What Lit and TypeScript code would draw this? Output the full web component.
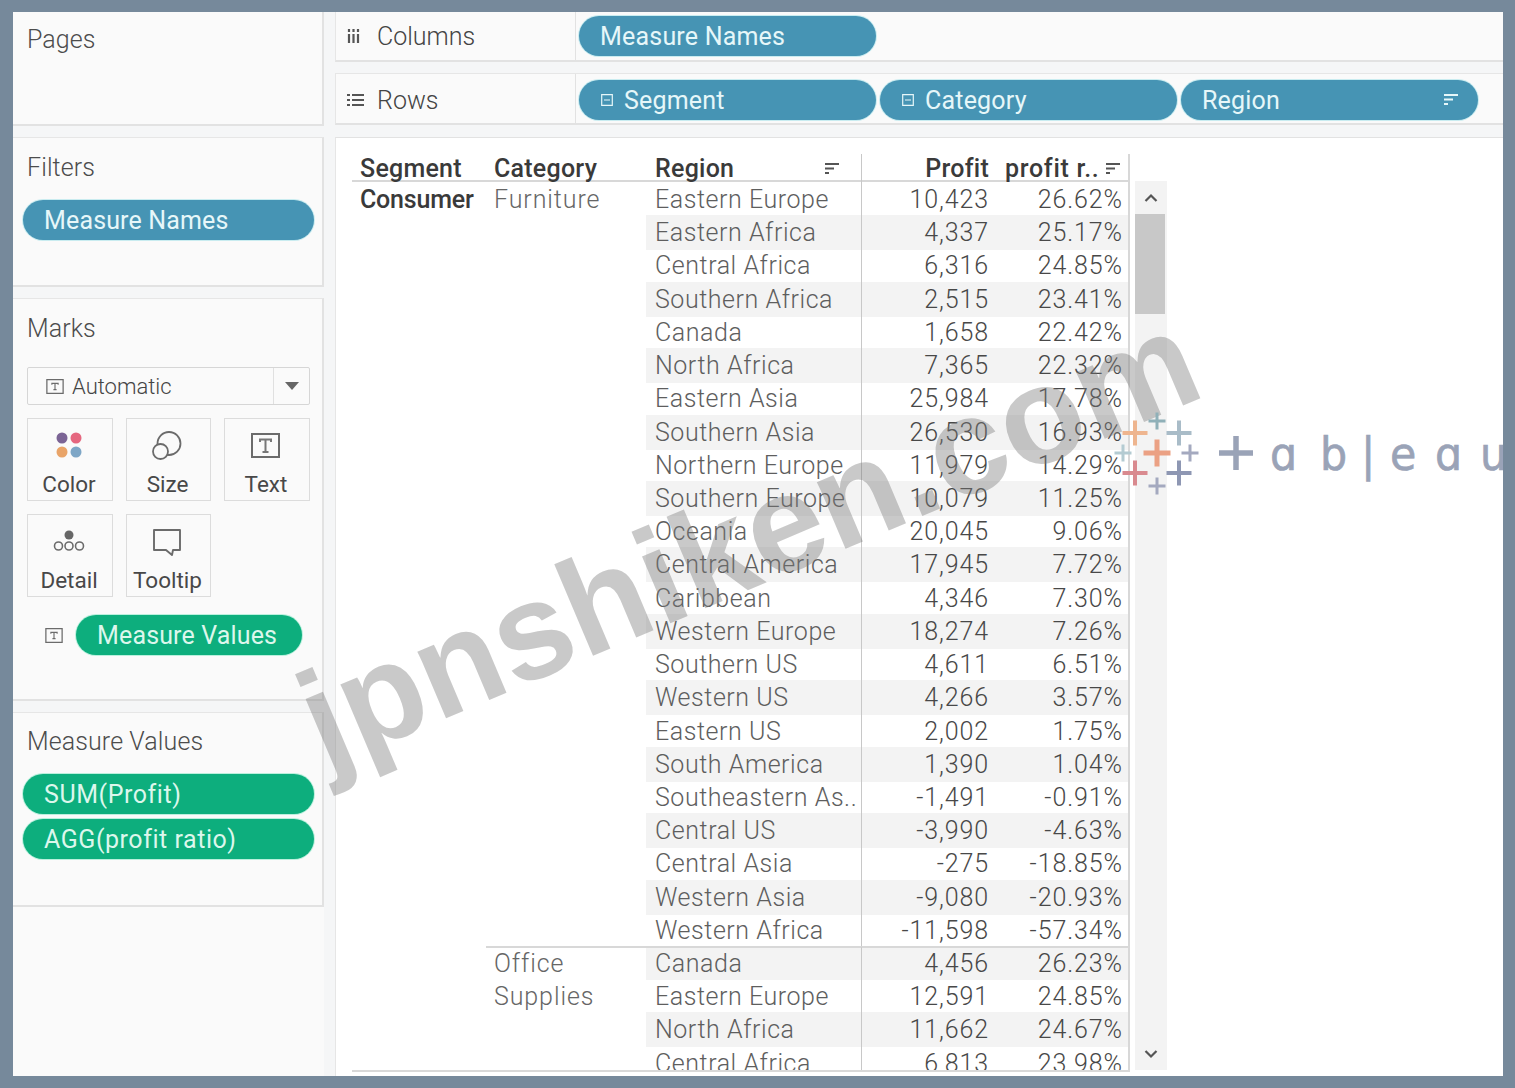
import { LitElement, html, css, svg } from "lit";
import { customElement } from "lit/decorators.js";

const rows: [string, string, string, string?, string?][] = [
  ["Eastern Europe","10,423","26.62%","Consumer","Furniture"],
  ["Eastern Africa","4,337","25.17%"],["Central Africa","6,316","24.85%"],["Southern Africa","2,515","23.41%"],
  ["Canada","1,658","22.42%"],["North Africa","7,365","22.32%"],["Eastern Asia","25,984","17.78%"],
  ["Southern Asia","26,530","16.93%"],["Northern Europe","11,979","14.29%"],["Southern Europe","10,079","11.25%"],
  ["Oceania","20,045","9.06%"],["Central America","17,945","7.72%"],["Caribbean","4,346","7.30%"],
  ["Western Europe","18,274","7.26%"],["Southern US","4,611","6.51%"],["Western US","4,266","3.57%"],
  ["Eastern US","2,002","1.75%"],["South America","1,390","1.04%"],["Southeastern As..","-1,491","-0.91%"],
  ["Central US","-3,990","-4.63%"],["Central Asia","-275","-18.85%"],["Western Asia","-9,080","-20.93%"],
  ["Western Africa","-11,598","-57.34%"],
  ["Canada","4,456","26.23%","","Office"],["Eastern Europe","12,591","24.85%","","Supplies"],
  ["North Africa","11,662","24.67%"],["Central Africa","6,813","23.98%"],
];

const sortIcon = html`<svg class="sort" viewBox="0 0 14 14"><path d="M0 2h14M0 6.5h9M0 11h4" fill="none" stroke="currentColor" stroke-width="2"/></svg>`;
const collapse = html`<svg class="collapse" viewBox="0 0 12 12"><path d="M.7.7h10.6v10.6H.7zM3 6h6" fill="none" stroke="currentColor" stroke-width="1.2"/></svg>`;
const tBox = (c: string) => html`<svg class=${c} viewBox="0 0 28 24"><path d="M1 1h26v22H1z" fill="none" stroke="#6b6b6b" stroke-width="2"/><path d="M9 9V7h10v2M14 7v10M11.5 17h5" fill="none" stroke="#6b6b6b" stroke-width="1.8"/></svg>`;

const plus = (x: number, y: number, s: number, w: number, c: string) =>
  svg`<path d="M${x - s / 2} ${y}h${s}M${x} ${y - s / 2}v${s}" stroke=${c} stroke-width=${w}/>`;

@customElement("app-root")
export class AppRoot extends LitElement {
  static styles = css`
    :host { display: block; width: 1515px; height: 1088px; background: #76899b; overflow: hidden; position: relative;
      font-family: Roboto, "Liberation Sans", sans-serif; color: #555; }
    * { box-sizing: border-box; }
    .frame { position: absolute; left: 13px; top: 12px; width: 1490px; height: 1064px; background: #f5f6f7;
      display: grid; grid-template-columns: 311px 1168px; column-gap: 11px; overflow: hidden; }
    .left, .right { display: flex; flex-direction: column; }
    .card { background: #fafafa; border-right: 2px solid #e2e2e2; border-bottom: 2px solid #e2e2e2; border-top: 1px solid #e6e6e6; }
    .title { font-size: 25px; line-height: 30px; color: #4c4c4c; font-weight: 300; letter-spacing: .1px; }
    .pages { height: 114px; padding: 13px 14px; border-top: 0; }
    .filters { height: 150px; margin-top: 11px; padding: 15px 10px 0; }
    .filters .title, .mv .title { padding-left: 4px; }
    .marks { height: 403px; margin-top: 11px; padding: 15px 12px 0 14px; }
    .mv { height: 195px; margin-top: 11px; padding: 14px 10px 0; }
    .rest { flex: 1; background: #fafafa; }
    .pill { height: 40px; border-radius: 20px; background: #4694b4; color: #e6f7f9; font-size: 25px; letter-spacing: .15px;
      display: flex; align-items: center; padding: 0 20px; box-shadow: 0 0 0 1px #c9ecf0; flex: none; }
    .pill.green { background: #0dae7d; color: #dcf7ec; box-shadow: 0 0 0 1px #baf0dd; }
    .filters .pill { margin-top: 17px; width: 291px; padding-left: 21px; }
    .mv .pill { margin-top: 5px; width: 291px; padding-left: 21px; letter-spacing: .55px; }
    .mv .title { margin-bottom: 17px; }
    .drop { margin-top: 23px; height: 38px; width: 283px; border: 1px solid #d6d6d6; border-radius: 2px; display: flex; align-items: center; font-size: 22px; font-weight: 300; color: #444; }
    .drop .lab { flex: 1; display: flex; align-items: center; gap: 8px; padding-left: 18px; height: 100%; border-right: 1px solid #e0e0e0; }
    .tsmall { width: 18px; height: 15px; }
    .caret { width: 35px; display: flex; justify-content: center; }
    .caret i { border: 7.5px solid transparent; border-top: 8px solid #666; border-bottom: 0; }
    .tiles { display: grid; grid-template-columns: 86px 85px 86px; column-gap: 13px; row-gap: 13px; margin-top: 13px; width: 284px; }
    .tile { height: 83px; border: 1px solid #dcdcdc; display: flex; flex-direction: column; align-items: center; font-size: 22.500px; color: #484848; padding: 12px 3px 0 0; position: relative; }
    .tile svg { height: 30px; width: 34px; }
    .tile span { position: absolute; bottom: 1px; left: 0; right: 2px; text-align: center; line-height: 30px; }
    .mvrow { display: flex; align-items: center; margin-top: 18px; padding-left: 18px; }
    .mvrow .pill { width: 226px; margin-left: 13px; padding-left: 21px; }
    .tmv { width: 18px; height: 15px; }
    .shelf { height: 51px; background: #fafafa; display: flex; border-left: 1px solid #e6e6e6; border-bottom: 2px solid #e2e2e2; }
    .shelf.c { height: 50px; }
    .shelf.r { margin-top: 11px; height: 52px; border-top: 1px solid #e6e6e6; }
    .shelfLab { width: 240px; border-right: 1px solid #e2e2e2; display: flex; align-items: center; font-size: 25px; font-weight: 300; color: #444; padding-left: 11px; gap: 13px; height: 100%; }
    .shelf.c .shelfLab { gap: 17px; }
    .shelf.r .shelfLab { padding-top: 3px; }
    .shelfLab svg { width: 17px; height: 14px; flex: none; margin-top: -1px; }
    .shelf.c .shelfLab svg { width: 13px; }
    .pills { display: flex; gap: 4px; padding-left: 3px; padding-top: 4px; }
    .shelf.r .pills { padding-top: 6px; }
    .shelf .pill { width: 297px; padding-left: 21px; letter-spacing: .2px; }
    .shelf.r .pill:not(:last-child) { padding-left: 22px; }
    .pill .collapse { width: 12px; height: 12px; margin-right: 11px; }
    .pill .sort { width: 14px; height: 14px; margin-left: auto; margin-right: 0; }
    .view { margin-top: 12px; flex: 1; background: #fff; border-left: 1px solid #e6e6e6; border-top: 1px solid #e2e2e2; display: flex; padding: 16px 0 0 16px; position: relative; overflow: hidden; }
    .table { width: 778px; height: 918px; flex: none; border-right: 2px solid #d8d8d8; border-bottom: 2px solid #d8d8d8; font-size: 25px; letter-spacing: .42px; display: flex; flex-direction: column; }
    .cols { display: grid; grid-template-columns: 134px 160px 215px 134px 133px; }
    .head { height: 28px; flex: none; border-bottom: 2px solid #d8d8d8; font-weight: 500; color: #3a3a3a; line-height: 29px; letter-spacing: .25px; }
    .head > div { padding-left: 8px; white-space: nowrap; }
    .head .reg { padding-left: 9px; padding-right: 22px; display: flex; align-items: center; justify-content: space-between; }
    .head .sort { width: 14px; height: 14px; color: #555; }
    .head .pro { border-left: 1px solid #c8c8c8; text-align: right; padding: 0 6px 0 0; }
    .head .rat { padding: 0 0 0 10px; display: flex; align-items: center; gap: 6px; letter-spacing: .7px; }
    .body { height: 888px; overflow: hidden; display: grid; grid-auto-rows: 33.23px; }
    .row { line-height: 35px; }
    .seg { padding-left: 8px; font-weight: 500; color: #3a3a3a; letter-spacing: -.2px; }
    .cat { padding-left: 8px; color: #666; font-weight: 300; letter-spacing: .9px; }
    .reg2 { padding-left: 9px; color: #5e5e5e; font-weight: 300; letter-spacing: .55px; white-space: nowrap; overflow: hidden; }
    .num { text-align: right; color: #484848; font-weight: 300; padding-right: 5px; letter-spacing: .9px; }
    .p { border-left: 1px solid #c8c8c8; padding-right: 6px; }
    .z .reg2, .z .num { background: #f3f3f3; }
    .sep > .cat, .sep > .reg2, .sep > .num { border-top: 2px solid #d8d8d8; line-height: 32px; }
    .scroll { margin-left: 5px; margin-top: 27px; width: 32px; height: 889px; background: #f3f3f3; display: flex; flex-direction: column; align-items: center; position: relative; flex: none; }
    .arrow { width: 30px; height: 33px; display: flex; align-items: center; justify-content: center; flex: none; }
    .arrow svg { width: 14px; height: 10px; }
    .thumb { width: 30px; height: 100px; background: #c8c8c8; align-self: flex-start; flex: none; }
    .sp { flex: 1; }
    .wm { position: absolute; left: 338px; top: 640px; font: bold 137px "Liberation Sans", sans-serif; color: rgba(120,120,120,.4); transform: rotate(-23deg); transform-origin: 0 100%; white-space: nowrap; pointer-events: none; line-height: 160px; }
    .logo { position: absolute; left: 0; top: 0; width: 1515px; height: 1088px; pointer-events: none; clip-path: inset(0 12px 0 0); }
    .logo svg { position: absolute; left: 0; top: 0; }
    .word { position: absolute; left: 1270px; top: 424px; font: 46px/60px "DejaVu Sans", sans-serif; color: #9aa3b7; -webkit-text-stroke: .7px #9aa3b7; display: flex; white-space: nowrap; }
    .word span { width: 45px; text-align: left; transform: scaleX(.93); transform-origin: 0 50%; }
    .word span:nth-child(1) { width: 50px; }
    .word span:nth-child(2) { width: 41px; }
    .word span:nth-child(3) { width: 29px; }
  `;

  render() {
    return html`
      <div class="frame">
        <div class="left">
          <div class="card pages"><div class="title">Pages</div></div>
          <div class="card filters"><div class="title">Filters</div><div class="pill">Measure Names</div></div>
          <div class="card marks">
            <div class="title">Marks</div>
            <div class="drop"><div class="lab">${tBox("tsmall")}Automatic</div><div class="caret"><i></i></div></div>
            <div class="tiles">
              <div class="tile"><svg viewBox="0 0 34 30"><circle cx="10" cy="7" r="5.500" fill="#7b6495"/><circle cx="24" cy="7" r="5.500" fill="#e5677f"/><circle cx="10" cy="21" r="5.500" fill="#e9a468"/><circle cx="24" cy="21" r="5.500" fill="#7ea6c6"/></svg><span>Color</span></div>
              <div class="tile"><svg viewBox="0 0 34 30"><circle cx="19" cy="12.500" r="11.500" fill="none" stroke="#6b6b6b" stroke-width="1.800"/><circle cx="10.500" cy="20.500" r="7.500" fill="#fafafa" stroke="#6b6b6b" stroke-width="1.800"/></svg><span>Size</span></div>
              <div class="tile"><svg viewBox="0 0 34 30"><path d="M3 3h27v23H3z" fill="none" stroke="#6b6b6b" stroke-width="2"/><path d="M11 11V8.500h11V11M16.500 8.500V21M13.500 21h6" fill="none" stroke="#777" stroke-width="2"/></svg><span>Text</span></div>
              <div class="tile"><svg viewBox="0 0 34 30"><circle cx="17" cy="8" r="4.500" fill="#666"/><circle cx="6.500" cy="19" r="4" fill="none" stroke="#6b6b6b" stroke-width="1.600"/><circle cx="17" cy="19" r="4" fill="none" stroke="#6b6b6b" stroke-width="1.600"/><circle cx="27.500" cy="19" r="4" fill="none" stroke="#6b6b6b" stroke-width="1.600"/></svg><span>Detail</span></div>
              <div class="tile"><svg viewBox="0 0 34 30"><path d="M4 3h26v20h-7l-1 5-6-5H4z" fill="none" stroke="#6b6b6b" stroke-width="1.900" stroke-linejoin="round"/></svg><span>Tooltip</span></div>
            </div>
            <div class="mvrow">${tBox("tmv")}<div class="pill green">Measure Values</div></div>
          </div>
          <div class="card mv">
            <div class="title">Measure Values</div>
            <div class="pill green">SUM(Profit)</div>
            <div class="pill green">AGG(profit ratio)</div>
          </div>
          <div class="rest"></div>
        </div>
        <div class="right">
          <div class="shelf c">
            <div class="shelfLab"><svg viewBox="0 0 13 14"><path d="M2 5v9M6.500 5v9M11 5v9M2 0v3M6.500 0v3M11 0v3" stroke="#555" stroke-width="2.200" fill="none"/></svg>Columns</div>
            <div class="pills"><div class="pill">Measure Names</div></div>
          </div>
          <div class="shelf r">
            <div class="shelfLab"><svg viewBox="0 0 17 14"><path d="M0 2h3M5 2h12M0 7h3M5 7h12M0 12h3M5 12h12" stroke="#555" stroke-width="2" fill="none"/></svg>Rows</div>
            <div class="pills">
              <div class="pill">${collapse}Segment</div>
              <div class="pill">${collapse}Category</div>
              <div class="pill">Region${sortIcon}</div>
            </div>
          </div>
          <div class="view">
            <div class="table">
              <div class="cols head">
                <div>Segment</div><div>Category</div>
                <div class="reg">Region${sortIcon}</div>
                <div class="pro">Profit</div>
                <div class="rat">profit r..${sortIcon}</div>
              </div>
              <div class="body">
                ${rows.map((r, i) => html`
                  <div class="cols row ${i % 2 ? "z" : ""} ${i === 23 ? "sep" : ""}">
                    <div class="seg">${r[3] ?? ""}</div>
                    <div class="cat">${r[4] ?? ""}</div>
                    <div class="reg2">${r[0]}</div>
                    <div class="num p">${r[1]}</div>
                    <div class="num">${r[2]}</div>
                  </div>`)}
              </div>
            </div>
            <div class="scroll">
              <div class="arrow"><svg viewBox="0 0 14 10"><path d="M1.500 8L7 2.500 12.500 8" fill="none" stroke="#555" stroke-width="2.200"/></svg></div>
              <div class="thumb"></div>
              <div class="sp"></div>
              <div class="arrow"><svg viewBox="0 0 14 10"><path d="M1.500 2L7 7.500 12.500 2" fill="none" stroke="#555" stroke-width="2.200"/></svg></div>
            </div>
          </div>
        </div>
      </div>
      <div class="wm">jpnshiken.com</div>
      <div class="logo">
        <svg width="1515" height="1088" viewBox="0 0 1515 1088" fill="none">
          ${plus(1135, 433, 25, 4, "#eeb58f")}
          ${plus(1157, 421, 17, 3, "#8fb0b8")}
          ${plus(1179, 433, 25, 4, "#a9bcc8")}
          ${plus(1123, 453, 17, 3, "#b4cbd2")}
          ${plus(1157, 453, 27, 5, "#eba184")}
          ${plus(1190, 453, 17, 3, "#a4a9bf")}
          ${plus(1135, 473, 25, 4, "#d98a8f")}
          ${plus(1179, 473, 25, 4, "#8e97b3")}
          ${plus(1157, 486, 17, 3, "#a4a9bf")}
          ${plus(1236, 453, 34, 5.500, "#9aa3b7")}
        </svg>
        <div class="word"><span>ɑ</span><span>b</span><span>|</span><span>e</span><span>ɑ</span><span>u</span></div>
      </div>
    `;
  }
}
